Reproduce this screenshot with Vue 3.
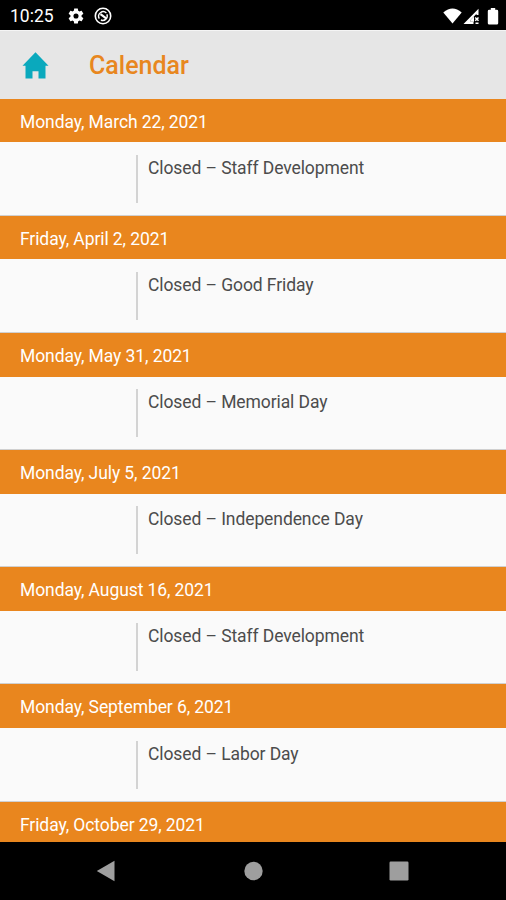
<template>
  <div class="screen">
    <header class="status-bar">
      <span class="status-bar__time">10:25</span>
      <svg class="status-bar__gear" viewBox="0 0 24 24">
        <path
          fill="#fff"
          fill-rule="evenodd"
          d="M19.4 13c.1-.7.1-1.3 0-2l2.1-1.6c.3-.2.3-.5.2-.7l-2-3.4c-.2-.3-.4-.4-.7-.3l-2.4 1c-.5-.4-1.1-.7-1.7-1l-.4-2.5c0-.3-.2-.5-.5-.5h-4c-.3 0-.5.2-.5.5L9.1 5c-.6.3-1.2.6-1.7 1L5 5c-.3-.1-.5 0-.7.3l-2 3.4c-.1.2-.1.5.2.7L4.6 11c-.1.7-.1 1.3 0 2l-2.1 1.6c-.3.2-.3.5-.2.7l2 3.4c.2.3.4.4.7.3l2.4-1c.5.4 1.1.7 1.7 1l.4 2.5c0 .3.2.5.5.5h4c.3 0 .5-.2.5-.5l.4-2.5c.6-.3 1.2-.6 1.7-1l2.4 1c.3.1.5 0 .7-.3l2-3.4c.1-.2.1-.5-.2-.7zM12 15.4a3.4 3.4 0 1 1 0-6.8 3.4 3.4 0 0 1 0 6.8z"
        />
      </svg>
      <svg class="status-bar__badge" viewBox="0 0 18 18">
        <circle cx="9" cy="9" r="7.7" fill="none" stroke="#fff" stroke-width="1.6" />
        <path
          d="M5.3 11.7a4.6 4.6 0 0 1 7.1-5.7M12.9 7.2a4.5 4.5 0 0 1-6 5.8"
          fill="none"
          stroke="#fff"
          stroke-width="1.4"
        />
        <path d="M6.5 7.2 12.2 11.3" stroke="#fff" stroke-width="2.2" />
      </svg>
      <span class="status-bar__space"></span>
      <svg class="status-bar__wifi" viewBox="0 0 19 16">
        <path d="M.3 4.4Q9.5-3.6 18.7 4.4L9.5 15.6z" fill="#fff" />
      </svg>
      <svg class="status-bar__signal" viewBox="0 0 17 17">
        <path d="M.5 16 15.5.8V7h-2V5.800L7.500 12v1.800h3V16z" fill="#fff" />
        <path d="M7.5 12 11 8.4v5.4H7.500z" fill="#fff" />
        <path d="m12.2 9.5 3.3 3.3M15.5 9.5l-3.3 3.3M12.5 15.3h3" stroke="#fff" stroke-width="1.5" />
      </svg>
      <svg class="status-bar__battery" viewBox="0 0 12 17">
        <path d="M3.8 0h4.4v1.8h1.600q1.400 0 1.400 1.400v12q0 1.400-1.400 1.400H2.200Q.8 16.600.8 15.200v-12q0-1.400 1.400-1.400h1.600z" fill="#fff" />
      </svg>
    </header>

    <div class="app-bar">
      <svg class="app-bar__home" viewBox="0 0 27 27">
        <path d="M13.5.2 26.5 13.800h-3v12.700h-7v-7.300h-6v7.300h-7V13.800h-3z" fill="#0aa9bd" />
      </svg>
      <h1 class="app-bar__title">Calendar</h1>
    </div>

    <main class="list">
      <section v-for="item in events" :key="item.date" class="event">
        <h2 class="event__date">{{ item.date }}</h2>
        <div v-if="item.title" class="event__body">
          <div class="event__title">{{ item.title }}</div>
        </div>
      </section>
    </main>

    <nav class="nav-bar">
      <svg viewBox="0 0 20 22"><path d="M.8 11 18.500.8v20.400z" fill="#9e9e9e" /></svg>
      <svg viewBox="0 0 20 22"><circle cx="10.5" cy="11" r="9.2" fill="#9e9e9e" /></svg>
      <svg viewBox="0 0 20 22"><rect x=".5" y="1.5" width="19" height="19" rx="1.2" fill="#9e9e9e" /></svg>
    </nav>
  </div>
</template>

<script setup>
const events = [
  { date: 'Monday, March 22, 2021', title: 'Closed – Staff Development' },
  { date: 'Friday, April 2, 2021', title: 'Closed – Good Friday' },
  { date: 'Monday, May 31, 2021', title: 'Closed – Memorial Day' },
  { date: 'Monday, July 5, 2021', title: 'Closed – Independence Day' },
  { date: 'Monday, August 16, 2021', title: 'Closed – Staff Development' },
  { date: 'Monday, September 6, 2021', title: 'Closed – Labor Day' },
  { date: 'Friday, October 29, 2021' }
]
</script>

<style>
body {
  margin: 0;
  background: #000;
}
</style>

<style scoped>
.screen {
  display: flex;
  flex-direction: column;
  height: 900px;
  overflow: hidden;
  font-family: Roboto, sans-serif;
  background: #000;
}

.status-bar {
  display: flex;
  align-items: center;
  box-sizing: border-box;
  flex: 0 0 30px;
  padding: 2px 7px 0 10px;
  color: #fff;
}

.status-bar__time {
  width: 57px;
  font-size: 17.5px;
  line-height: 28px;
}

.status-bar__gear {
  width: 18px;
  height: 18px;
}

.status-bar__badge {
  width: 18px;
  height: 18px;
  margin-left: 9px;
}

.status-bar__space {
  flex: 1;
}

.status-bar__wifi {
  width: 19px;
  height: 16px;
}

.status-bar__signal {
  width: 17px;
  height: 17px;
  margin-left: 1px;
}

.status-bar__battery {
  width: 12px;
  height: 17px;
  margin-left: 7px;
}

.app-bar {
  display: flex;
  align-items: center;
  box-sizing: border-box;
  flex: 0 0 68.5px;
  padding: 2px 22px 0;
  border-top: 1px solid #f5f5f5;
  background: #e6e6e6;
}

.app-bar__home {
  width: 27px;
  height: 27px;
}

.app-bar__title {
  margin: 0 0 0 40px;
  font-size: 25px;
  font-weight: 500;
  line-height: 32px;
  color: #e8871f;
}

.list {
  flex: 1;
  min-height: 0;
  overflow: hidden;
  background: #fafafa;
}

.event__date {
  box-sizing: border-box;
  height: 43.7px;
  margin: 0;
  padding: 2px 20px 0;
  font-size: 17.5px;
  font-weight: 400;
  line-height: 43px;
  letter-spacing: -0.09px;
  color: #fff;
  background: #e9861e;
}

.event__body {
  box-sizing: border-box;
  height: 73.5px;
  padding: 12.4px 0 0 136px;
  border-bottom: 1px solid #d0d0d0;
}

.event__title {
  height: 48px;
  padding-left: 10px;
  border-left: 2px solid #d3d3d3;
  font-size: 17.5px;
  line-height: 26px;
  letter-spacing: -0.09px;
  color: #4c4c4c;
}

.nav-bar {
  display: flex;
  align-items: center;
  justify-content: space-between;
  box-sizing: border-box;
  flex: 0 0 58px;
  padding: 0 97px 0 96px;
}

.nav-bar svg {
  width: 20px;
  height: 22px;
}
</style>
